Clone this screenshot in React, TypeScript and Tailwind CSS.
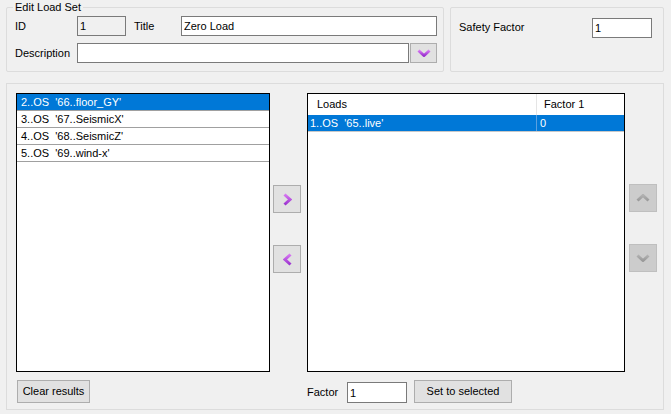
import React from 'react';

const leftItems = [
  "2..OS  '66..floor_GY'",
  "3..OS  '67..SeismicX'",
  "4..OS  '68..SeismicZ'",
  "5..OS  '69..wind-x'",
];

type Dir = 'up' | 'down' | 'left' | 'right';

// chevron glyph drawn like the little bitmap arrows on the buttons
function Chevron({ dir, disabled = false, id }: { dir: Dir; disabled?: boolean; id: string }) {
  const horizontal = dir === 'left' || dir === 'right';
  const w = horizontal ? 9 : 14;
  const h = horizontal ? 13 : 8;
  const points =
    dir === 'down'
      ? '1.5,1.5 7,6.5 12.5,1.5'
      : dir === 'up'
      ? '1.5,6.5 7,1.5 12.5,6.5'
      : dir === 'right'
      ? '1.5,1.5 7,6.5 1.5,11.5'
      : '7.5,1.5 2,6.5 7.5,11.5';
  return (
    <svg width={w} height={h} viewBox={`0 0 ${w} ${h}`}>
      <defs>
        <linearGradient id={id} x1="0" y1="0" x2="0" y2="1">
          <stop offset="0" stopColor={disabled ? '#b0b0b0' : '#d777f2'} />
          <stop offset="1" stopColor={disabled ? '#9a9a9a' : '#9b33cf'} />
        </linearGradient>
      </defs>
      <polyline points={points} fill="none" stroke={`url(#${id})`} strokeWidth={3} strokeLinejoin="miter" />
    </svg>
  );
}

function TextBox({ value, className = '', disabled = false }: { value: string; className?: string; disabled?: boolean }) {
  return (
    <input
      readOnly
      defaultValue={value}
      className={`h-[20px] border border-[#7a7a7a] px-[2px] outline-none text-[11px] ${
        disabled ? 'bg-[#f0f0f0]' : 'bg-white'
      } ${className}`}
    />
  );
}

export default function App() {
  return (
    <div className="w-[671px] h-[414px] bg-[#f0f0f0] overflow-hidden text-[11px] text-black font-['Liberation_Sans',Arial,sans-serif] leading-[13px]">
      {/* top row */}
      <div className="flex items-start">
        <div className="relative mt-[7px] ml-[6px] w-[438px] h-[65px] border border-[#dcdcdc] rounded-[2px] pt-[8px] pl-[8px]">
          <span className="absolute -top-[7px] left-[6px] bg-[#f0f0f0] px-[2px]">Edit Load Set</span>
          <div className="flex items-center h-[20px]">
            <span className="w-[62px]">ID</span>
            <TextBox value="1" disabled className="w-[49px]" />
            <span className="w-[47px] pl-[8px] box-content">Title</span>
            <TextBox value="Zero Load" className="w-[256px]" />
          </div>
          <div className="flex items-center h-[20px] mt-[7px]">
            <span className="w-[62px]">Description</span>
            <TextBox value="" className="w-[332px]" />
            <button className="ml-[1px] w-[27px] h-[20px] bg-[#e1e1e1] border border-[#adadad] flex items-center justify-center">
              <Chevron dir="down" id="g-desc" />
            </button>
          </div>
        </div>
        <div className="mt-[7px] ml-[6px] w-[214px] h-[65px] border border-[#dcdcdc] rounded-[2px] pt-[10px] pl-[8px] flex items-start">
          <span className="w-[133px] mt-[3px]">Safety Factor</span>
          <TextBox value="1" className="w-[60px]" />
        </div>
      </div>

      {/* main panel */}
      <div className="mt-[11px] ml-[6px] w-[658px] h-[327px] border border-[#dcdcdc] pt-[9px] pl-[9px]">
        <div className="flex items-start">
          <div className="w-[254px] h-[279px] border border-black bg-white">
            {leftItems.map((item, i) => (
              <div
                key={item}
                className={`h-[17px] pl-[4px] flex items-center whitespace-pre border-b border-[#a0a0a0] ${
                  i === 0 ? 'bg-[#0078d7] text-white' : ''
                }`}
              >
                {item}
              </div>
            ))}
          </div>

          <div className="ml-[3px] flex flex-col">
            <button className="mt-[92px] w-[28px] h-[28px] bg-[#e1e1e1] border border-[#adadad] flex items-center justify-center">
              <Chevron dir="right" id="g-right" />
            </button>
            <button className="mt-[32px] w-[28px] h-[28px] bg-[#e1e1e1] border border-[#adadad] flex items-center justify-center">
              <Chevron dir="left" id="g-left" />
            </button>
          </div>

          <div className="ml-[6px] w-[318px] h-[279px] border border-black bg-white">
            <div className="flex h-[21px] items-center">
              <div className="w-[229px] h-full flex items-center pl-[9px] border-r border-[#e5e5e5]">Loads</div>
              <div className="pl-[7px]">Factor 1</div>
            </div>
            <div className="flex h-[17px] items-center bg-[#0078d7] text-white border-b border-[#c8c8c8]">
              <div className="w-[229px] h-full flex items-center pl-[2px] whitespace-pre border-r border-[#5aa0e0]">
                1..OS  '65..live'
              </div>
              <div className="pl-[3px]">0</div>
            </div>
          </div>

          <div className="ml-[4px] flex flex-col">
            <button className="mt-[91px] w-[28px] h-[28px] bg-[#cccccc] border border-[#bfbfbf] flex items-center justify-center">
              <Chevron dir="up" disabled id="g-up" />
            </button>
            <button className="mt-[32px] w-[28px] h-[28px] bg-[#cccccc] border border-[#bfbfbf] flex items-center justify-center">
              <Chevron dir="down" disabled id="g-down" />
            </button>
          </div>
        </div>

        {/* bottom row */}
        <div className="flex items-center mt-[8px]">
          <div className="w-[291px]">
            <button className="ml-[1px] w-[73px] h-[23px] bg-[#e1e1e1] border border-[#adadad]">Clear results</button>
          </div>
          <span className="w-[40px] mt-[2px]">Factor</span>
          <TextBox value="1" className="w-[60px] h-[21px] mt-[2px]" />
          <button className="ml-[7px] w-[98px] h-[23px] bg-[#e1e1e1] border border-[#adadad]">Set to selected</button>
        </div>
      </div>
    </div>
  );
}
